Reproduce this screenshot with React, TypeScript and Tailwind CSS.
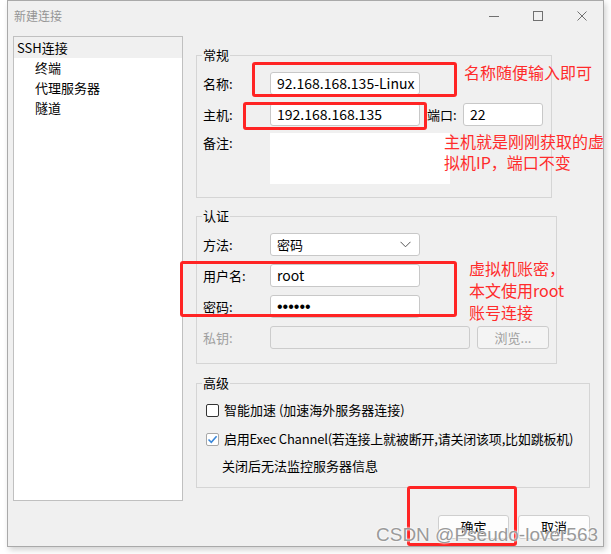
import type { ReactNode } from 'react'

const font = { fontFamily: '"Noto Sans CJK SC", "Noto Sans", sans-serif' }

function Group({ title, className, children }: { title: string; className: string; children: ReactNode }) {
  return (
    <div className={`relative border border-[#d5d5d5] ${className}`}>
      <span className="absolute -top-[11px] left-[5px] bg-[#f0f0f0] px-px text-[13px] leading-[20px] text-black">
        {title}
      </span>
      {children}
    </div>
  )
}

function Field({ label, children, gray }: { label: string; children: ReactNode; gray?: boolean }) {
  return (
    <div className="flex items-center h-[23px]">
      <span className={`w-[73px] shrink-0 pl-[6px] text-[13px] ${gray ? 'text-[#a0a0a0]' : 'text-black'}`}>{label}</span>
      {children}
    </div>
  )
}

function Input({ value, className = 'w-[150px]' }: { value?: ReactNode; className?: string }) {
  return (
    <div className={`h-[23px] ${className} border border-[#c8c8c8] rounded-[3px] bg-white flex items-center px-[6px] text-[14px] text-black overflow-hidden whitespace-nowrap`}>
      {value}
    </div>
  )
}

function Checkbox({ checked }: { checked?: boolean }) {
  return (
    <div className={`w-[13px] h-[13px] rounded-[2px] border bg-white flex items-center justify-center ${checked ? 'border-[#a8a8a8]' : 'border-[#333]'}`}>
      {checked && (
        <svg width="11" height="11" viewBox="0 0 11 11">
          <path d="M1.5 5.5 L4.3 8.3 L9.6 2.2" fill="none" stroke="#3a87d9" strokeWidth="1.6" />
        </svg>
      )}
    </div>
  )
}

const redBox = 'absolute border-[3px] border-[#ff2424] rounded-[3px]'
const redText = 'absolute text-[16px] text-[#ff2b2b] leading-[21px] whitespace-nowrap'

export default function App() {
  return (
    <div className="relative w-[611px] h-[554px] bg-white overflow-hidden" style={font}>
      <div className="ml-[7px] w-[597px] h-[547px] border border-[#a9a9a9] bg-[#f0f0f0] shadow-[2px_3px_6px_rgba(0,0,0,0.18)] flex flex-col">
        {/* title bar */}
        <div className="h-[35px] flex items-start pt-[6px] pl-[6px] pr-[16px]">
          <span className="text-[12px] leading-[18px] text-[#959595]">新建连接</span>
          <div className="ml-auto flex items-center gap-[34px] h-[18px]">
            <svg width="10" height="10" viewBox="0 0 10 10">
              <path d="M0 5.5 H10" stroke="#707070" strokeWidth="1" />
            </svg>
            <svg width="10" height="10" viewBox="0 0 10 10">
              <rect x="0.5" y="0.5" width="9" height="9" fill="none" stroke="#707070" strokeWidth="1" />
            </svg>
            <svg width="10" height="10" viewBox="0 0 10 10">
              <path d="M0.5 0.5 L9.5 9.5 M9.5 0.5 L0.5 9.5" stroke="#707070" strokeWidth="1" />
            </svg>
          </div>
        </div>

        <div className="flex pl-[5px]">
          {/* tree */}
          <div className="w-[170px] h-[465px] border border-[#c0c0c0] bg-white text-[13px] text-black">
            <div className="h-[21px] bg-[#f0f0f0] pl-[3px] flex items-center">SSH连接</div>
            <div className="h-[20px] pl-[21px] flex items-center">终端</div>
            <div className="h-[20px] pl-[21px] flex items-center">代理服务器</div>
            <div className="h-[20px] pl-[21px] flex items-center">隧道</div>
          </div>

          {/* right column */}
          <div className="ml-[13px] flex flex-col">
            <Group title="常规" className="mt-[19px] w-[356px] h-[143px] pt-[16px]">
              <Field label="名称:">
                <Input value="92.168.168.135-Linux" />
              </Field>
              <div className="mt-[8px]">
                <Field label="主机:">
                  <Input value="192.168.168.135" />
                  <span className="w-[43px] pl-[7px] text-[13px] text-black">端口:</span>
                  <Input value="22" className="w-[80px]" />
                </Field>
              </div>
              <div className="mt-[7px] flex items-start">
                <span className="w-[73px] pl-[6px] text-[13px] leading-[20px] text-black">备注:</span>
                <div className="w-[180px] h-[51px] bg-white" />
              </div>
            </Group>

            <Group title="认证" className="mt-[18px] w-[361px] h-[148px] pt-[16px] flex flex-col gap-[8px]">
              <Field label="方法:">
                <div className="h-[23px] w-[150px] border border-[#c8c8c8] rounded-[3px] bg-white flex items-center pl-[6px] pr-[8px] text-[13px] text-black">
                  <span>密码</span>
                  <svg className="ml-auto" width="11" height="7" viewBox="0 0 11 7">
                    <path d="M0.5 0.8 L5.5 5.8 L10.5 0.8" fill="none" stroke="#555" strokeWidth="1" />
                  </svg>
                </div>
              </Field>
              <Field label="用户名:">
                <Input value="root" />
              </Field>
              <Field label="密码:">
                <Input
                  value={
                    <span className="text-[16px] leading-[16px]" style={{ fontFamily: '"Liberation Sans", Arial, sans-serif' }}>
                      ••••••
                    </span>
                  }
                />
              </Field>
              <Field label="私钥:" gray>
                <div className="h-[23px] w-[200px] border border-[#cccccc] rounded-[3px] bg-[#f0f0f0]" />
                <div className="ml-[7px] h-[23px] w-[72px] border border-[#cccccc] rounded-[3px] bg-[#f4f4f4] flex items-center justify-center text-[13px] text-[#a0a0a0]">
                  浏览...
                </div>
              </Field>
            </Group>

            <Group title="高级" className="mt-[19px] w-[394px] h-[105px] pt-[16px] text-[13px] text-black">
              <div className="h-[20px] flex items-center pl-[9px] gap-[5px]">
                <Checkbox />
                <span>智能加速 (加速海外服务器连接)</span>
              </div>
              <div className="mt-[9px] h-[20px] flex items-center pl-[9px] gap-[5px]">
                <Checkbox checked />
                <span className="tracking-[-0.2px]">启用Exec Channel(若连接上就被断开,请关闭该项,比如跳板机)</span>
              </div>
              <div className="mt-[7px] h-[20px] flex items-center pl-[25px]">关闭后无法监控服务器信息</div>
            </Group>

            <div className="mt-[27px] flex gap-[9px] pl-[242px] text-[13px] text-black">
              <div className="w-[71px] h-[24px] border border-[#cfcfcf] rounded-[3px] bg-[#fdfdfd] flex items-center justify-center">确定</div>
              <div className="w-[72px] h-[24px] border border-[#cfcfcf] rounded-[3px] bg-[#fdfdfd] flex items-center justify-center">取消</div>
            </div>
          </div>
        </div>
      </div>

      {/* annotations */}
      <div className={`${redBox} left-[252px] top-[62px] w-[205px] h-[35px]`} />
      <div className={`${redBox} left-[243px] top-[102px] w-[184px] h-[28px]`} />
      <div className={`${redBox} left-[180px] top-[261px] w-[277px] h-[56px]`} />
      <div className={`${redBox} left-[407px] top-[486px] w-[110px] h-[60px]`} />

      <div className={`${redText} left-[464px] top-[62px]`}>名称随便输入即可</div>
      <div className={`${redText} left-[444px] top-[131px]`}>
        主机就是刚刚获取的虚
        <br />
        拟机IP，端口不变
      </div>
      <div className={`${redText} left-[469px] top-[257px] leading-[22px]`}>
        虚拟机账密，
        <br />
        本文使用root
        <br />
        账号连接
      </div>

      <div
        className="absolute left-[376px] top-[524px] text-[19px] leading-[22px] text-[#9a9a9a] whitespace-nowrap [text-shadow:0_0_2px_#fff,0_0_2px_#fff]"
        style={{ fontFamily: '"Liberation Sans", Arial, sans-serif' }}
      >
        CSDN @Pseudo-lover563
      </div>
    </div>
  )
}
